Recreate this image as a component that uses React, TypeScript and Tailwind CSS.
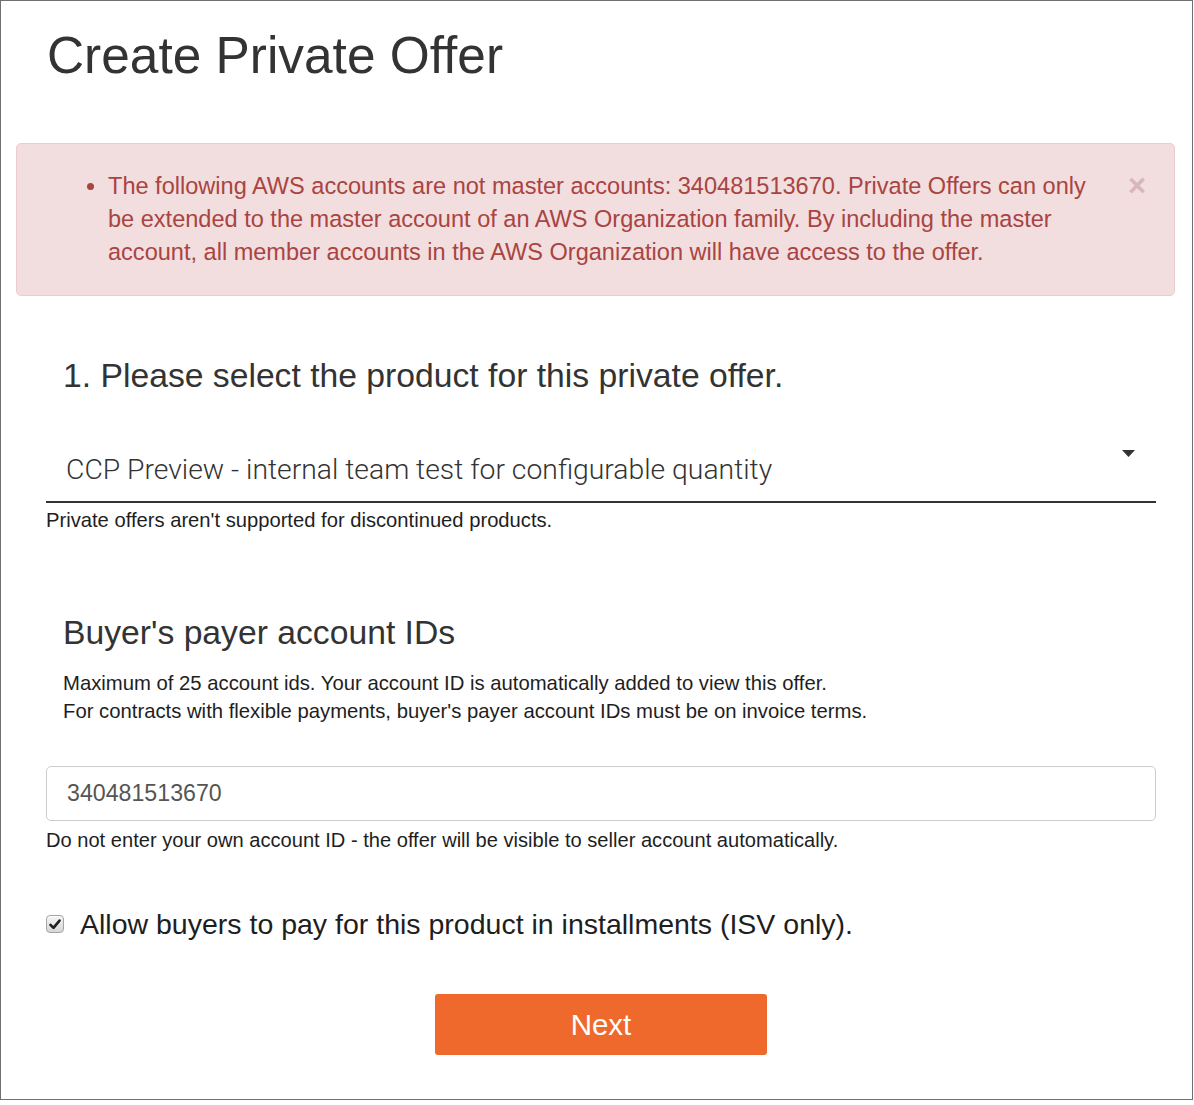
import React, { useState } from 'react';

const Caret: React.FC = () => (
    <svg width="13" height="7" viewBox="0 0 13 7" className="mt-[4px] mr-[21px]">
        <path d="M0 0 L13 0 L6.5 7 Z" fill="#333" />
    </svg>
);

const Checkbox: React.FC<{ checked: boolean, onChange: () => void }> = ({ checked, onChange }) => (
    <button
        type="button"
        onClick={onChange}
        className="w-[18px] h-[18px] rounded-[4px] border border-[#a4a4a4] bg-gradient-to-b from-[#f6f6f6] to-[#d6d6d6] flex items-center justify-center shadow-[inset_0_1px_0_#fff]"
    >
        {checked && (
            <svg width="12" height="11" viewBox="0 0 12 11">
                <path d="M1.5 5.8 L4.5 8.8 L10.5 1.6" fill="none" stroke="#1f1f1f" strokeWidth="2.6" strokeLinecap="round" strokeLinejoin="round" />
            </svg>
        )}
    </button>
);

function App() {
    const [showAlert, setShowAlert] = useState(true);
    const [accounts, setAccounts] = useState('340481513670');
    const [installments, setInstallments] = useState(true);

    return (
        <div className="w-[1193px] h-[1100px] border border-[#6f6f6f] bg-white text-[#333] font-['Liberation_Sans',Arial,sans-serif]">
            <h1 className="ml-[46px] mt-[26px] text-[51.4px] leading-[56px] text-[#333]">Create Private Offer</h1>

            {showAlert && (
                <div className="ml-[15px] mt-[60px] w-[1159px] h-[153px] flex items-start rounded-[5px] border border-[#ebccd1] bg-[#f2dede] pl-[91px] pr-[28px] pt-[26px] text-[#a94442]">
                    <ul className="list-disc w-[995px] text-[23.55px] leading-[33px]">
                        <li>
                            The following AWS accounts are not master accounts: 340481513670. Private Offers can only be extended to the master account of an AWS Organization family. By including the master account, all member accounts in the AWS Organization will have access to the offer.
                        </li>
                    </ul>
                    <button
                        onClick={() => setShowAlert(false)}
                        className="ml-auto mt-[-1px] text-[31px] leading-[33px] font-bold text-[#d9b6b8]"
                    >
                        ×
                    </button>
                </div>
            )}

            <div className="ml-[45px] w-[1110px]">
                <h2 className="ml-[17px] mt-[59px] text-[33.7px] leading-[40px]">1. Please select the product for this private offer.</h2>

                <div className="mt-[51px] h-[57px] flex justify-between border-b-2 border-[#333]">
                    <div className="self-end pb-[14px] pl-[20px] font-['Roboto',sans-serif] font-light text-[28.3px] leading-[34px] text-[#333]">
                        CCP Preview - internal team test for configurable quantity
                    </div>
                    <Caret />
                </div>
                <p className="mt-[5px] text-[20.2px] leading-[24px] text-[#1e1e1e]">Private offers aren't supported for discontinued products.</p>

                <h2 className="ml-[17px] mt-[80px] text-[33.7px] leading-[40px]">Buyer's payer account IDs</h2>
                <div className="ml-[17px] mt-[17px] text-[20.3px] leading-[28px] text-[#1e1e1e]">
                    <p>Maximum of 25 account ids. Your account ID is automatically added to view this offer.</p>
                    <p>For contracts with flexible payments, buyer's payer account IDs must be on invoice terms.</p>
                </div>

                <input
                    value={accounts}
                    onChange={(e) => setAccounts(e.target.value)}
                    className="mt-[41px] block w-full h-[55px] rounded-[5px] border border-[#cccccc] pl-[20px] text-[23.2px] text-[#555] outline-none"
                />
                <p className="mt-[7px] text-[20.1px] leading-[24px] text-[#1e1e1e]">Do not enter your own account ID - the offer will be visible to seller account automatically.</p>

                <div className="mt-[54px] flex items-center gap-[16px]">
                    <Checkbox checked={installments} onChange={() => setInstallments(!installments)} />
                    <label className="text-[28.5px] leading-[36px] text-[#1e1e1e]">Allow buyers to pay for this product in installments (ISV only).</label>
                </div>
            </div>

            <button className="ml-[434px] mt-[52px] w-[332px] h-[61px] rounded-[3px] bg-[#ee692b] text-white text-[29.5px] leading-[61px] text-center">
                Next
            </button>
        </div>
    );
}

export default App;
